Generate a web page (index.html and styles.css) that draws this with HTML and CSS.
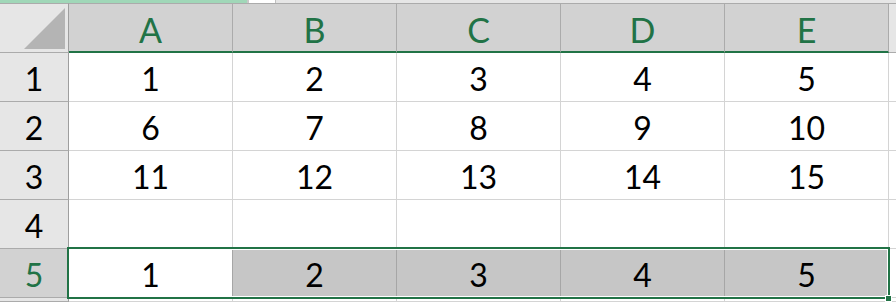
FILE: index.html
```html
<!DOCTYPE html>
<html>
<head>
<meta charset="utf-8">
<link rel="stylesheet" href="styles.css">
</head>
<body>
<div class="topbar">
  <div class="tab-green"></div>
  <div class="tab-white"></div>
  <div class="tab-rest"></div>
</div>
<div class="sheet">
  <div class="corner"><svg class="tri" width="42" height="42" viewBox="0 0 42 42"><polygon points="41,0 41,41 0,41" fill="#b4b4b4"/></svg></div>
  <div class="colhead">A</div>
  <div class="colhead">B</div>
  <div class="colhead">C</div>
  <div class="colhead">D</div>
  <div class="colhead">E</div>
  <div class="colhead-rest"></div>

  <div class="rowhead">1</div>
  <div class="cell">1</div><div class="cell">2</div><div class="cell">3</div><div class="cell">4</div><div class="cell">5</div><div class="cell-rest"></div>

  <div class="rowhead">2</div>
  <div class="cell">6</div><div class="cell">7</div><div class="cell">8</div><div class="cell">9</div><div class="cell">10</div><div class="cell-rest"></div>

  <div class="rowhead">3</div>
  <div class="cell">11</div><div class="cell">12</div><div class="cell">13</div><div class="cell">14</div><div class="cell">15</div><div class="cell-rest"></div>

  <div class="rowhead">4</div>
  <div class="cell"></div><div class="cell"></div><div class="cell"></div><div class="cell"></div><div class="cell"></div><div class="cell-rest"></div>

  <div class="rowhead rowhead-sel">5</div>
  <div class="cell cell-active">1</div><div class="cell cell-sel">2</div><div class="cell cell-sel">3</div><div class="cell cell-sel">4</div><div class="cell cell-sel">5</div><div class="cell-rest"></div>

  <div class="rowhead"></div>
  <div class="cell"></div><div class="cell"></div><div class="cell"></div><div class="cell"></div><div class="cell"></div><div class="cell-rest"></div>

  <div class="selection"></div>
  <div class="handle"></div>
</div>
</body>
</html>
```
FILE: styles.css
```css
html, body {
  margin: 0;
  padding: 0;
  background: #ffffff;
  width: 896px;
  height: 302px;
  overflow: hidden;
  font-family: Lato, "Open Sans", sans-serif;
}
.topbar {
  display: flex;
  height: 3px;
}
.tab-green {
  width: 247px;
  background: #a0d7b8;
}
.tab-white {
  width: 26px;
  background: #ffffff;
  border-left: 2px solid #c8c8c8;
  border-right: 1px solid #c0c0c0;
}
.tab-rest {
  flex: 1;
  background: #e6e6e6;
}
.sheet {
  position: relative;
  display: grid;
  grid-template-columns: 69px repeat(5, 164px) 7px;
  grid-template-rows: 50px repeat(5, 49px) 1fr;
  height: 299px;
}
.corner {
  box-sizing: border-box;
  background: #e6e6e6;
  border-top: 1px solid #ababab;
  border-right: 1px solid #9e9e9e;
  border-bottom: 1px solid #ababab;
  position: relative;
}
.tri {
  position: absolute;
  left: 24px;
  top: 4px;
}
.colhead {
  box-sizing: border-box;
  background: #d2d2d2;
  border-top: 1px solid #ababab;
  border-right: 1px solid #ababab;
  border-bottom: 2px solid #217346;
  color: #217346;
  font-size: 34px;
  display: flex;
  align-items: center;
  justify-content: center;
  padding-top: 3px;
}
.colhead-rest {
  box-sizing: border-box;
  background: #e6e6e6;
  border-top: 1px solid #ababab;
  border-bottom: 1px solid #ababab;
}
.rowhead {
  box-sizing: border-box;
  background: #e6e6e6;
  border-right: 1px solid #9e9e9e;
  border-bottom: 1px solid #ababab;
  color: #000;
  font-size: 32px;
  display: flex;
  align-items: center;
  justify-content: center;
  padding-top: 3px;
}
.rowhead-sel {
  background: #d2d2d2;
  color: #217346;
}
.cell {
  box-sizing: border-box;
  border-right: 1px solid #d4d4d4;
  border-bottom: 1px solid #d4d4d4;
  color: #000;
  font-size: 32px;
  display: flex;
  align-items: center;
  justify-content: center;
  padding-top: 3px;
}
.cell-active {
  border-right-color: #a6a6a6;
}
.cell-sel {
  background: #c6c6c6;
  border-right-color: #a6a6a6;
}
.cell-rest {
  box-sizing: border-box;
  border-bottom: 1px solid #d4d4d4;
}
.selection {
  position: absolute;
  box-sizing: border-box;
  left: 67px;
  top: 244px;
  width: 823px;
  height: 52px;
  border: 2px solid #217346;
  box-shadow: inset 0 0 0 1px #ffffff;
  pointer-events: none;
}
.handle {
  position: absolute;
  box-sizing: border-box;
  left: 885px;
  top: 292px;
  width: 7px;
  height: 7px;
  background: #217346;
  border: 1px solid #ffffff;
}
```
